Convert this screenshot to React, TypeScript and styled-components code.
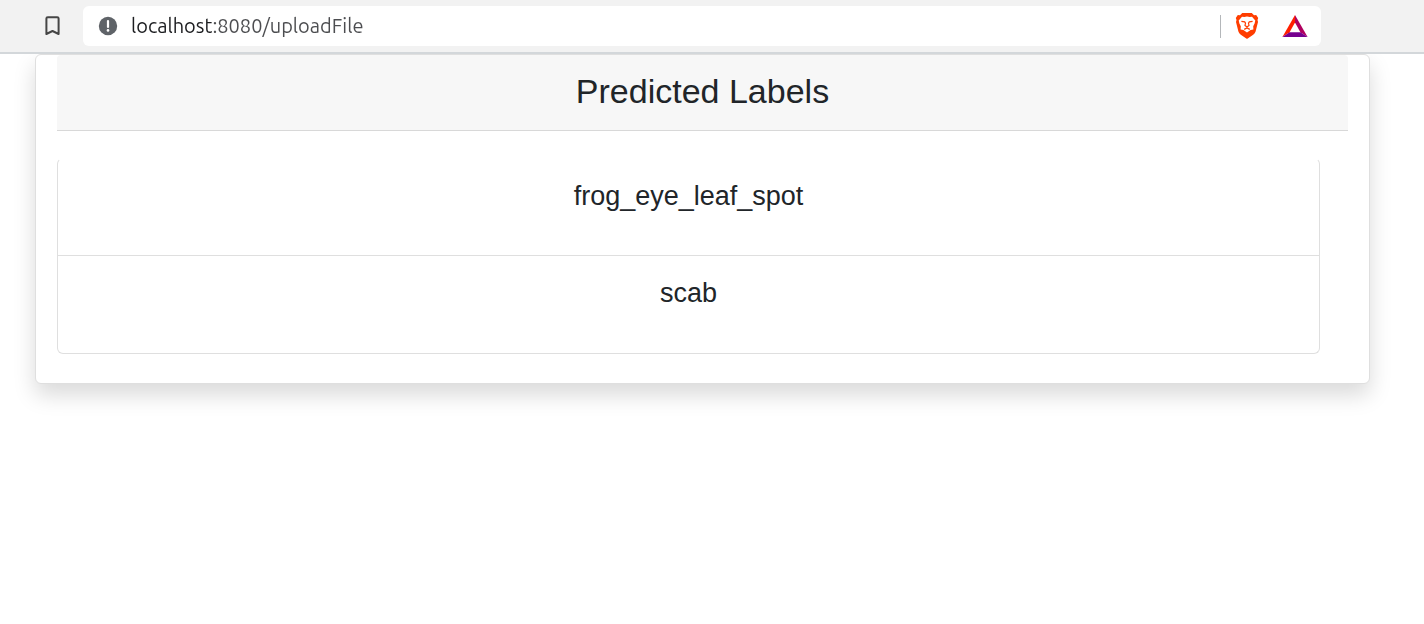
import React from "react";
import styled, { createGlobalStyle } from "styled-components";

const GlobalStyle = createGlobalStyle`
  *, *::before, *::after {
    box-sizing: border-box;
  }
  body {
    min-height: 100vh;
    margin: 0;
    background: #ffffff;
    color: #212529;
    font-family: "Liberation Sans", Arial, sans-serif;
  }
`;

const Toolbar = styled.header`
  position: relative;
  z-index: 1;
  display: flex;
  align-items: center;
  gap: 20px;
  padding: 6px 103px 6px 42px;
  background: #f2f2f2;
  border-bottom: 2px solid #d3d7da;
`;

const IconButton = styled.button<{ $width: number }>`
  display: flex;
  flex: none;
  align-items: center;
  justify-content: center;
  width: ${(p) => p.$width}px;
  height: 28px;
  padding: 0;
  border: 0;
  background: none;
  cursor: pointer;
`;

const AddressBar = styled.form`
  display: flex;
  flex: 1;
  align-items: center;
  min-width: 0;
  height: 40px;
  padding: 0 12px 0 15px;
  background: #ffffff;
  border-radius: 6px;
`;

const AddressInput = styled.input`
  flex: 1;
  min-width: 0;
  height: 40px;
  margin-left: 12px;
  padding: 0 0 2px;
  border: 0;
  outline: 0;
  color: #333333;
  font-family: Ubuntu, "Noto Sans", sans-serif;
  font-size: 20px;
  font-weight: 400;
  background: linear-gradient(to right, #1c1d20 81px, #4c4d50 81px);
  background-clip: text;
  -webkit-background-clip: text;
  -webkit-text-fill-color: transparent;
`;

const Divider = styled.span`
  flex: none;
  width: 1px;
  height: 23px;
  margin-right: 12px;
  background: #b4b7ba;
`;

const Extensions = styled.div`
  display: flex;
  gap: 20px;
`;

const Card = styled.main`
  margin: 0 54px 0 35px;
  padding: 0 21px 29px;
  background: #ffffff;
  border: 1px solid #dfdfdf;
  border-radius: 6px;
  box-shadow: 0 11px 22px rgba(0, 0, 0, 0.15);
`;

const CardTitle = styled.h1`
  margin: 0;
  padding: 16px 0 19px;
  background: #f7f7f7;
  border-bottom: 1px solid #d8d8d8;
  border-radius: 4px 4px 0 0;
  font-size: 34px;
  font-weight: 400;
  line-height: 40px;
  text-align: center;
`;

const LabelList = styled.ul`
  margin: 27px 28px 0 0;
  padding: 0 0 1px;
  list-style: none;
  border: 1px solid #dfdfdf;
  border-top-color: transparent;
  border-radius: 6px;
`;

const LabelItem = styled.li`
  padding: 17px 27px 38px;
  font-size: 27px;
  line-height: 41px;
  text-align: center;

  & + & {
    border-top: 1px solid #dfdfdf;
  }
`;

const labels = ["frog_eye_leaf_spot", "scab"];

function BookmarkIcon() {
  return (
    <svg width="20" height="22" viewBox="0 0 20 22" fill="none" aria-hidden="true">
      <path
        d="M4.8 2.2H14.2Q15.6 2.2 15.6 3.6V19L9.5 16L3.4 19V3.6Q3.4 2.2 4.8 2.2Z"
        stroke="#464646"
        strokeWidth="2"
        strokeLinejoin="round"
      />
    </svg>
  );
}

function InfoIcon() {
  return (
    <svg width="21" height="20" viewBox="0 0 21 20" aria-hidden="true">
      <circle cx="10" cy="10" r="9.2" fill="#5f6368" />
      <path d="M10 5V11" stroke="#fff" strokeWidth="2.2" strokeLinecap="round" />
      <circle cx="10" cy="14.4" r="1.3" fill="#fff" />
    </svg>
  );
}

function LionIcon() {
  return (
    <svg width="24" height="28" viewBox="0 0 24 28" fill="none" aria-hidden="true">
      <path
        d="M7.2 1H16.8L19 3.3L21.2 3.1L23.2 6L22.5 8L23 10L20.6 19.4Q20 21.4 18.2 22.7L12.7 26.4Q12 26.9 11.3 26.4L5.8 22.7Q4 21.4 3.4 19.4L1 10L1.5 8L.8 6L2.8 3.1L5 3.3Z"
        fill="#ff3d00"
      />
      <path
        d="M7 4.7L9.3 5.1L12 4.5L14.7 5.1L17 4.7L20.3 8.5L19.6 11.5L18.2 14.2L18.4 17.4L15.6 18L12 20.6L8.4 18L5.6 17.4L5.8 14.2L4.4 11.5L3.7 8.5Z"
        fill="#fff"
      />
      <path
        d="M6.4 9.4L9.7 9.9L10.5 11.2L10 13.4L12 15L14 13.4L13.5 11.2L14.3 9.9L17.6 9.4M12 15V16.4M9.2 17.4L12 16L14.8 17.4"
        stroke="#ff3d00"
        strokeWidth="1.2"
      />
    </svg>
  );
}

function TriangleIcon() {
  return (
    <svg width="26" height="24" viewBox="0 0 26 24" aria-hidden="true">
      <path d="M13 1L.4 23L7.6 18.3L13 8.6Z" fill="#ff1f00" />
      <path d="M13 1L25.6 23L18.4 18.3L13 8.6Z" fill="#b0005f" />
      <path d="M.4 23H25.6L18.4 18.3H7.6Z" fill="#75008f" />
    </svg>
  );
}

export default function App() {
  return (
    <>
      <GlobalStyle />
      <Toolbar>
        <IconButton type="button" $width={21} aria-label="Bookmark this tab">
          <BookmarkIcon />
        </IconButton>
        <AddressBar onSubmit={(e: React.FormEvent) => e.preventDefault()}>
          <IconButton type="button" $width={21} aria-label="View site information">
            <InfoIcon />
          </IconButton>
          <AddressInput
            type="text"
            aria-label="Address"
            defaultValue="localhost:8080/uploadFile"
            spellCheck={false}
          />
          <Divider />
          <Extensions>
            <IconButton type="button" $width={28} aria-label="Brave Shields">
              <LionIcon />
            </IconButton>
            <IconButton type="button" $width={28} aria-label="Brave Rewards">
              <TriangleIcon />
            </IconButton>
          </Extensions>
        </AddressBar>
      </Toolbar>
      <Card>
        <CardTitle>Predicted Labels</CardTitle>
        <LabelList>
          {labels.map((label) => (
            <LabelItem key={label}>{label}</LabelItem>
          ))}
        </LabelList>
      </Card>
    </>
  );
}
